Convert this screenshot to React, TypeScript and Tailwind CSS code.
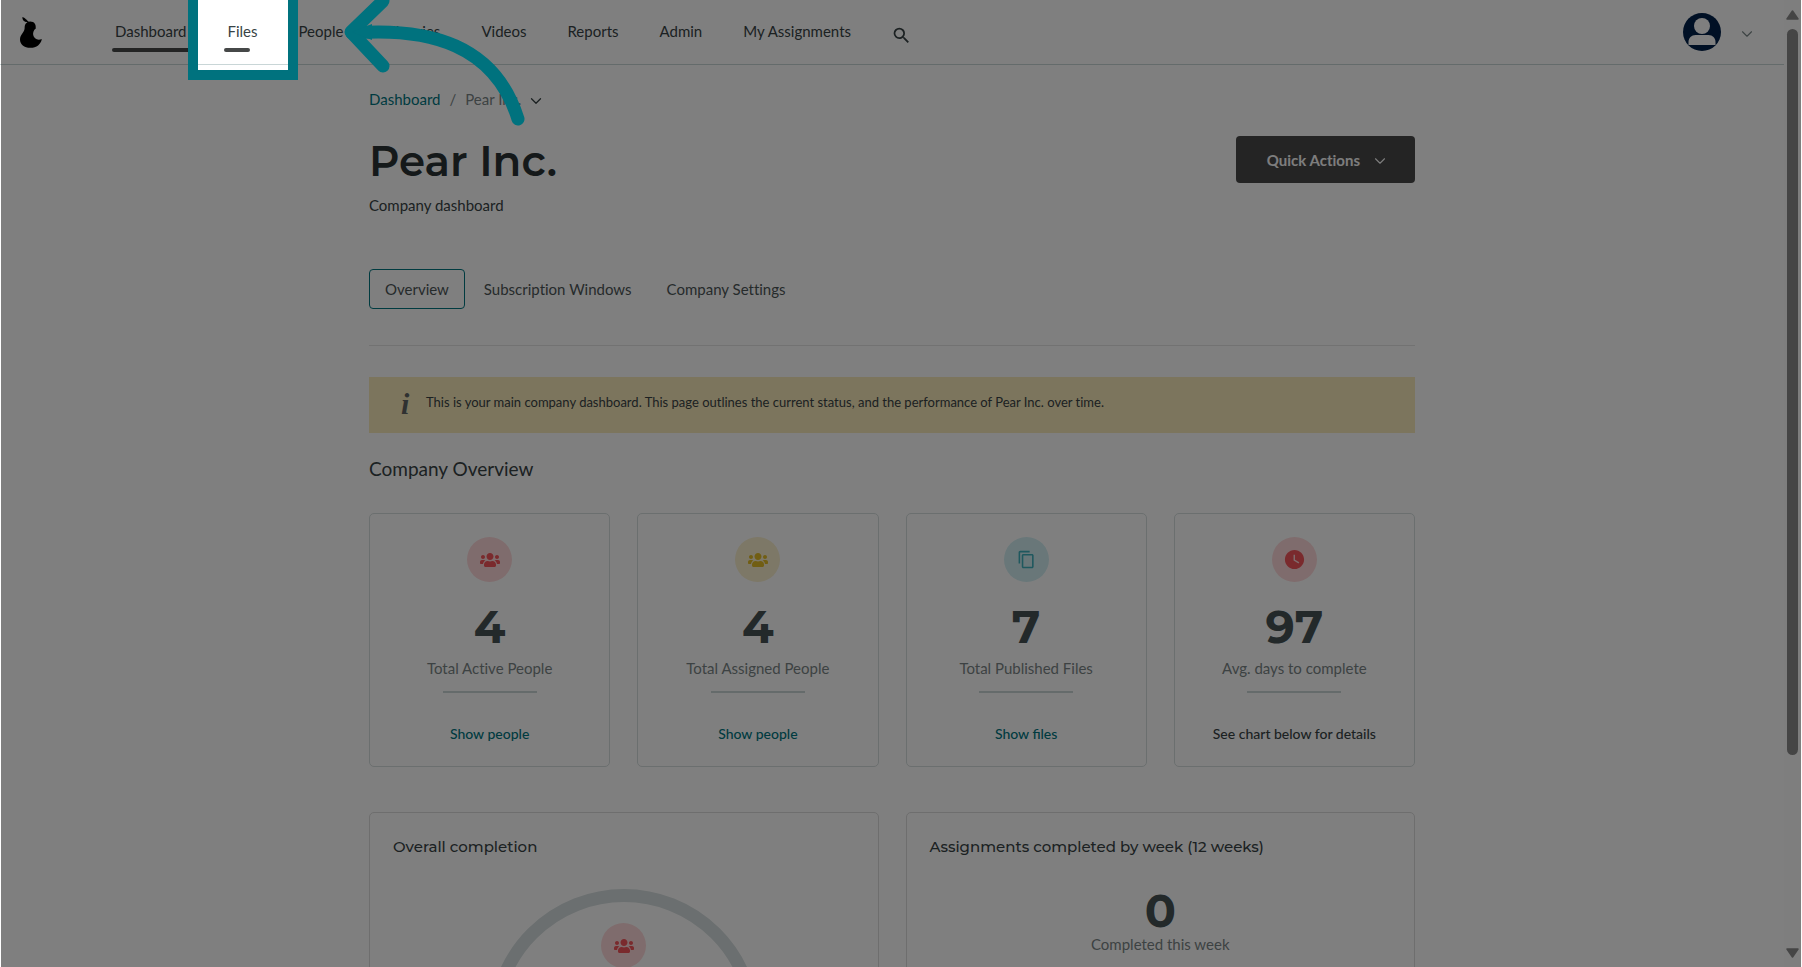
import type { ReactNode } from 'react';
import { ChevronDown } from 'lucide-react';
import { FaUsers } from 'react-icons/fa';
import { MdContentCopy, MdSearch, MdWatchLater } from 'react-icons/md';

const navItems = [
  { label: 'Dashboard', bar: '-mr-1' },
  { label: 'Files', bar: 'w-[26px]' },
  { label: 'People', bar: '' },
  { label: 'Libraries', bar: '' },
  { label: 'Videos', bar: '' },
  { label: 'Reports', bar: '' },
  { label: 'Admin', bar: '' },
  { label: 'My Assignments', bar: '' },
];

const tabs = ['Overview', 'Subscription Windows', 'Company Settings'];

const stats = [
  { value: '4', label: 'Total Active People', link: 'Show people', accent: 'bg-[#ffd9da] text-[#f4545a]', icon: <FaUsers size={20} /> },
  { value: '4', label: 'Total Assigned People', link: 'Show people', accent: 'bg-[#faf0cf] text-[#e3bd27]', icon: <FaUsers size={20} /> },
  { value: '7', label: 'Total Published Files', link: 'Show files', accent: 'bg-[#d2eff3] text-[#3fb0bd]', icon: <MdContentCopy size={19} /> },
  { value: '97', label: 'Avg. days to complete', note: 'See chart below for details', accent: 'bg-[#ffd9da] text-[#f4545a]', icon: <MdWatchLater size={23} /> },
];

function IconBadge({ accent, children }: { accent: string; children: ReactNode }) {
  return <div className={`flex size-[45px] items-center justify-center rounded-full ${accent}`}>{children}</div>;
}

function PearLogo() {
  return (
    <svg viewBox="0 0 22 31" className="h-[31px] w-[22px]" aria-hidden="true">
      <path d="M2.4 0C5 .8 7 2.600 7 5C4.400 5 2.200 3.200 2.400 0Z" />
      <path d="M7 5.500C9 4 13.500 4.200 15 7C16 9 15.600 10.200 15.800 11.500C13.600 13 12.800 15.500 13.200 18C13.800 21.500 17.500 23.800 21.800 22C21 27.300 16.500 30.800 10.500 30.800C4 30.800 0 27.400 0 22.500C0 17.500 4.200 15.800 4.600 11.500C4.700 9 4.600 7 7 5.500Z" />
      <path d="M5.800 3L9 6" stroke="#000" strokeWidth="1.2" />
    </svg>
  );
}

function Avatar() {
  return (
    <svg viewBox="0 0 38 38" className="size-[38px]" aria-hidden="true">
      <circle cx="19" cy="19" r="19" fill="#00204a" />
      <circle cx="19" cy="13" r="8" fill="#fff" />
      <path d="M5.500 32V29C5.500 25 8.500 22 12.500 22H25.500C29.500 22 32.500 25 32.500 29V32Z" fill="#fff" />
    </svg>
  );
}

function Header() {
  return (
    <header className="flex h-[65px] items-start border-b border-[#c9d6d7] pl-5">
      <a href="#home" aria-label="Home" className="mt-[17px]">
        <PearLogo />
      </a>
      <nav className="ml-[69px] flex gap-[33px] pt-[19px]">
        {navItems.map((item) => (
          <a key={item.label} href="#nav" className="flex flex-col px-1">
            <span>{item.label}</span>
            {item.bar && <span className={`mt-[5px] -ml-[3px] h-1 rounded-full bg-[#464848] ${item.bar}`} />}
          </a>
        ))}
      </nav>
      <button type="button" aria-label="Search" className="mt-[25px] ml-9">
        <MdSearch size={21} />
      </button>
      <button type="button" aria-label="Account menu" className="mt-[13px] mr-[28px] ml-auto flex items-center gap-[17px]">
        <Avatar />
        <ChevronDown size={18} strokeWidth={1.5} className="mt-1 text-[#7a8788]" />
      </button>
    </header>
  );
}

function Scrollbar() {
  return (
    <div className="flex w-[18px] shrink-0 flex-col items-center bg-[#fcfcfc] pt-[10px] pr-px pb-[9px]" aria-hidden="true">
      <svg viewBox="0 0 13 10" className="h-[10px] w-[13px]">
        <path d="M6.500 1L12 9H1Z" fill="#8b8b8b" stroke="#8b8b8b" strokeWidth="1.500" strokeLinejoin="round" />
      </svg>
      <div className="mt-[9px] flex w-[11px] grow flex-col">
        <div className="h-[79%] rounded-full bg-[#8b8b8b]" />
      </div>
      <svg viewBox="0 0 13 10" className="h-[10px] w-[13px]">
        <path d="M6.500 9L12 1H1Z" fill="#8b8b8b" stroke="#8b8b8b" strokeWidth="1.500" strokeLinejoin="round" />
      </svg>
    </div>
  );
}

function Highlight() {
  return (
    <div className="pointer-events-none absolute inset-y-0 right-px left-px overflow-hidden">
      <div className="absolute -top-[10px] left-[187px] h-[90px] w-[110px] border-10 border-[#00727e] shadow-[0_0_0_2000px_rgba(0,0,0,0.5)]" />
      <svg viewBox="0 0 560 140" className="absolute top-0 -left-px h-[140px] w-[560px]" fill="none" stroke="#00727e" strokeWidth="13" strokeLinecap="round" strokeLinejoin="round">
        <path d="M352 33C430 27 495 45 518 119" />
        <path d="M383 1L351 32L383 66" />
        <path d="M352 32L372 24V40Z" fill="#00727e" stroke="none" />
      </svg>
    </div>
  );
}

export default function App() {
  return (
    <div className="relative flex h-screen overflow-hidden bg-white font-['Lato',sans-serif] text-[15px] leading-6 text-[#384345] [font-variant-ligatures:none]">
      <div className="min-w-0 grow">
        <Header />
        <main className="mx-auto max-w-[1046px] pt-[22px]">
          <div className="flex items-center">
            <a href="#dashboard" className="text-[#007681]">Dashboard</a>
            <span className="mx-[9px] text-[#7a8586]">/</span>
            <span className="text-[#7a8586]">Pear Inc.</span>
            <button type="button" aria-label="Switch company" className="mt-[3px] ml-[6px]">
              <ChevronDown size={18} strokeWidth={1.75} />
            </button>
          </div>

          <div className="mt-[25px] flex items-start justify-between">
            <div>
              <h1 className="font-['Montserrat','Inter',sans-serif] text-[42px] leading-[50px] font-semibold text-[#2b3334]">Pear Inc.</h1>
              <p className="mt-[7px]">Company dashboard</p>
            </div>
            <button type="button" className="flex h-[47px] items-center gap-[11px] rounded bg-[#484848] pr-[26px] pl-[31px] font-bold text-[#fafafa]">
              Quick Actions
              <ChevronDown size={18} strokeWidth={1.5} className="mt-[3px]" />
            </button>
          </div>

          <div className="mt-[52px] flex h-10 gap-[3px] text-[#4d5657]">
            {tabs.map((tab, i) => (
              <button
                key={tab}
                type="button"
                className={`rounded border px-[15px] ${i === 0 ? 'border-[#007681]' : 'border-transparent'}`}
              >
                {tab}
              </button>
            ))}
          </div>

          <hr className="mt-9 border-[#e4e4e4]" />

          <div className="mt-[31px] flex h-14 items-start bg-[#f9eaba] pt-[13px] pl-8 text-[13px]">
            <span className="w-[25px] font-['Liberation_Serif',serif] text-[30px] leading-7 font-bold text-[#5f6363] italic" aria-hidden="true">i</span>
            <p>This is your main company dashboard. This page outlines the current status, and the performance of Pear Inc. over time.</p>
          </div>

          <h2 className="mt-[22px] text-[19px] leading-7">Company Overview</h2>

          <div className="mt-[30px] grid grid-cols-4 gap-[27px]">
            {stats.map((stat) => (
              <div key={stat.label} className="flex h-[254px] flex-col items-center rounded-[5px] border border-[#d6dede] pt-[23px]">
                <IconBadge accent={stat.accent}>{stat.icon}</IconBadge>
                <p className="mt-[21px] font-['Montserrat','Inter',sans-serif] text-[46px] leading-[48px] font-bold text-[#465254]">{stat.value}</p>
                <p className="mt-[5px] text-[#7a8586]">{stat.label}</p>
                <div className="mt-[11px] h-[2px] w-[94px] bg-[#cbd6d6]" />
                {stat.link ? (
                  <a href="#details" className="mt-[29px] text-[14px] font-medium text-[#007681] [font-variant-ligatures:normal]">{stat.link}</a>
                ) : (
                  <p className="mt-[29px] text-[14px] font-medium">{stat.note}</p>
                )}
              </div>
            ))}
          </div>

          <div className="mt-[45px] grid grid-cols-2 gap-[27px]">
            <section className="rounded-[5px] border border-[#dcdcdc] px-[23px] pt-[22px]">
              <h3 className="font-['Montserrat','Inter',sans-serif] text-[15px] font-medium">Overall completion</h3>
              <div className="mt-[30px] flex justify-center">
                <div className="flex size-[272px] flex-col items-center rounded-full border-[13px] border-[#d7dfe0] pt-[21px]">
                  <IconBadge accent="bg-[#ffd9da] text-[#f4545a]">
                    <FaUsers size={20} />
                  </IconBadge>
                </div>
              </div>
            </section>
            <section className="rounded-[5px] border border-[#dcdcdc] px-[23px] pt-[22px]">
              <h3 className="font-['Montserrat','Inter',sans-serif] text-[15px] font-medium">Assignments completed by week (12 weeks)</h3>
              <div className="mt-[31px] flex flex-col items-center">
                <p className="font-['Montserrat','Inter',sans-serif] text-[46px] leading-[42px] font-bold text-[#465254]">0</p>
                <p className="text-[#7a8586]">Completed this week</p>
              </div>
            </section>
          </div>
        </main>
      </div>
      <Scrollbar />
      <Highlight />
    </div>
  );
}
